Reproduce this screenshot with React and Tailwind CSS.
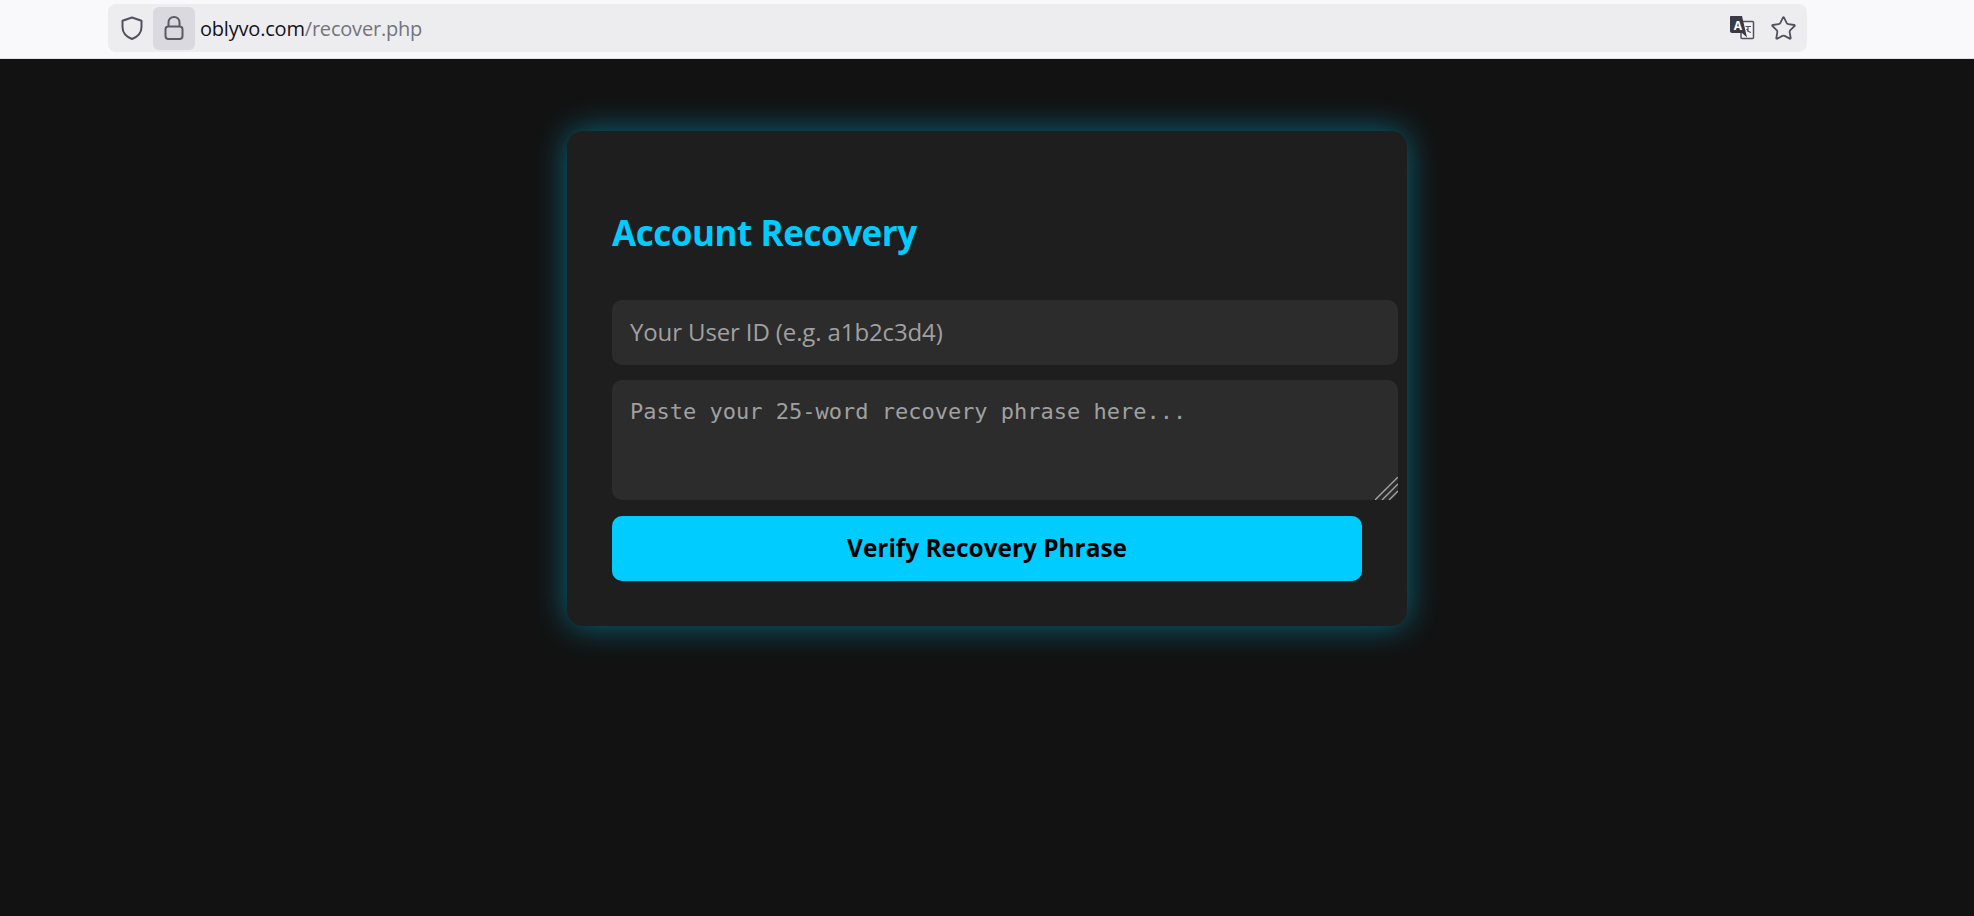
import { Star } from "lucide-react";

function ShieldIcon() {
  return (
    <svg width="24" height="26" viewBox="0 0 24 26" fill="none" stroke="#52525e" strokeWidth="2" strokeLinejoin="round">
      <path d="M12 2.5 L21.5 5.8 V12 C21.5 17.5 17.5 21.8 12 24 C6.5 21.8 2.5 17.5 2.5 12 V5.8 Z" />
    </svg>
  );
}

function LockIcon() {
  return (
    <svg width="20" height="26" viewBox="0 0 20 26" fill="none" stroke="#5b5b66" strokeWidth="2">
      <rect x="1.5" y="11.5" width="17" height="12.5" rx="3" />
      <path d="M4.5 11.5 V7.5 C4.5 4.2 6.8 2 10 2 C13.2 2 15.5 4.2 15.5 7.5 V11.5" />
    </svg>
  );
}

function TranslateIcon() {
  return (
    <svg width="26" height="26" viewBox="0 0 26 26">
      <rect x="12" y="6.5" width="12.5" height="17" rx="1" fill="#f4f4f6" stroke="#52525e" strokeWidth="1.5" />
      <path d="M2 1 H13 L18 22.5 L13 18 H3 C2 18 1 17 1 16 V2 C1 1.4 1.4 1 2 1 Z" fill="#3a3a44" />
      <text x="9" y="14.5" textAnchor="middle" fontSize="12" fontWeight="700" fill="#fff" fontFamily="'Open Sans', sans-serif">A</text>
      <path d="M16.5 11.5 H22 M19 11 V17 M17.5 14 C18.5 16 20 17 22 17.5" fill="none" stroke="#52525e" strokeWidth="1.2" />
    </svg>
  );
}

function ResizeGrip() {
  return (
    <svg width="23" height="23" viewBox="0 0 23 23" stroke="#a5a5a5" strokeWidth="1.4" className="absolute right-0 bottom-0">
      <path d="M0 23 L23 0 M7 23 L23 7 M14 23 L23 14" />
    </svg>
  );
}

export default function App() {
  return (
    <div className="min-h-screen bg-[#121212] font-['Open_Sans',sans-serif]">

      {/* Browser bar */}
      <div className="h-[59px] bg-[#f9f9fb] border-b border-[#e0e0e6] pt-1 pl-[108px] pr-[167px]">
        <div className="h-12 rounded-lg bg-[#ededf0] flex items-center pl-3 pr-[10px]">
          <ShieldIcon />
          <div className="ml-[9px] w-[42px] h-[43px] rounded-md bg-[#d9d9df] flex items-center justify-center">
            <LockIcon />
          </div>
          <div className="ml-[5px] mt-[2px] text-[20px] tracking-[-0.2px] text-[#15141a]">
            oblyvo.com<span className="text-[#74747c]">/recover.php</span>
          </div>
          <div className="ml-auto flex items-center gap-[15px]">
            <TranslateIcon />
            <Star size={27} strokeWidth={1.6} color="#52525e" />
          </div>
        </div>
      </div>

      {/* Recovery card */}
      <div className="w-[840px] h-[495px] mx-auto mt-[72px] rounded-[16px] bg-[#1e1e1e] p-[45px] shadow-[0_0_33px_rgba(0,204,255,0.46)]">
        <h2 className="mt-[34px] text-[35px] leading-[46px] font-bold text-[#00ccff] tracking-[-0.45px]">Account Recovery</h2>
        <input
          placeholder="Your User ID (e.g. a1b2c3d4)"
          className="block mt-[44px] w-[786px] h-[65px] px-[18px] pb-[2px] rounded-[10px] bg-[#2c2c2c] text-[24px] text-white placeholder:text-[#a0a0a0] tracking-[-0.12px] outline-none"
        />
        <div className="relative mt-[15px] w-[786px] h-[120px]">
          <textarea
            placeholder="Paste your 25-word recovery phrase here..."
            className="block w-full h-full px-[18px] pt-[19px] rounded-[10px] bg-[#2c2c2c] text-[22px] leading-[26px] text-white placeholder:text-[#a0a0a0] font-['DejaVu_Sans_Mono',monospace] tracking-[0px] outline-none resize-none"
          />
          <ResizeGrip />
        </div>
        <button className="block mt-4 w-[750px] h-[65px] rounded-[10px] bg-[#00ccff] text-black text-[24.4px] font-bold">
          Verify Recovery Phrase
        </button>
      </div>
    </div>
  );
}
